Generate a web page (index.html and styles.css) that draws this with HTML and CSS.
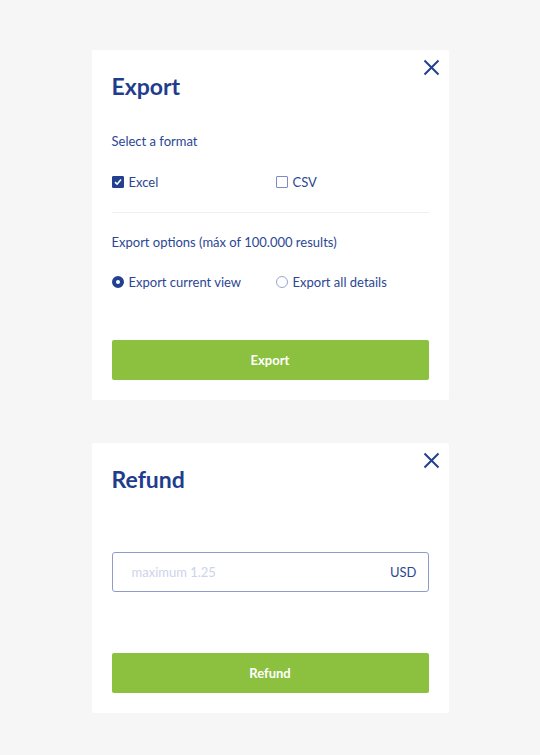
FILE: index.html
```html
<!DOCTYPE html>
<html lang="en">
<head>
<meta charset="utf-8">
<title>Dialogs</title>
<link rel="stylesheet" href="styles.css">
</head>
<body>
<main class="page">
  <section class="card card-export">
    <button class="close" aria-label="Close">
      <svg width="17" height="17" viewBox="0 0 17 17"><path d="M1.5 1.5 L15.5 15.5 M15.5 1.5 L1.5 15.5" stroke="#23408f" stroke-width="2" fill="none"/></svg>
    </button>
    <h2 class="title">Export</h2>
    <p class="label label-format">Select a format</p>
    <div class="options options-format">
      <label class="opt"><span class="box checked"><svg width="8" height="8" viewBox="0 0 8 8"><path d="M1 4.2 L3.1 6.2 L7 1.6" stroke="#fff" stroke-width="1.6" fill="none"/></svg></span>Excel</label>
      <label class="opt"><span class="box"></span>CSV</label>
    </div>
    <hr class="divider">
    <p class="label label-options">Export options (máx of 100.000 results)</p>
    <div class="options options-radio">
      <label class="opt"><span class="radio checked"></span>Export current view</label>
      <label class="opt"><span class="radio"></span>Export all details</label>
    </div>
    <button class="primary primary-export">Export</button>
  </section>

  <section class="card card-refund">
    <button class="close" aria-label="Close">
      <svg width="17" height="17" viewBox="0 0 17 17"><path d="M1.5 1.5 L15.5 15.5 M15.5 1.5 L1.5 15.5" stroke="#23408f" stroke-width="2" fill="none"/></svg>
    </button>
    <h2 class="title title-refund">Refund</h2>
    <div class="field">
      <input class="amount" type="text" placeholder="maximum 1.25">
      <span class="currency">USD</span>
    </div>
    <button class="primary primary-refund">Refund</button>
  </section>
</main>
</body>
</html>
```

FILE: styles.css
```css
* { box-sizing: border-box; }
html, body { margin: 0; padding: 0; }
body {
  background: #f6f6f6;
  font-family: Lato, "Liberation Sans", sans-serif;
  color: #2b4794;
  width: 540px;
  height: 755px;
}
.page {
  display: flex;
  flex-direction: column;
  align-items: center;
  padding-top: 50px;
  gap: 43px;
}
.card {
  position: relative;
  width: 357px;
  background: #fff;
  border-radius: 2px;
  padding: 22px 20px 20px 20px;
  display: flex;
  flex-direction: column;
}
.close {
  position: absolute;
  top: 9px;
  right: 9px;
  width: 17px;
  height: 17px;
  padding: 0;
  border: 0;
  background: none;
  display: flex;
}
.title {
  margin: 0;
  font-size: 23px;
  line-height: 28px;
  font-weight: 700;
  color: #1f3d8c;
}
.label {
  margin: 0;
  font-size: 13px;
  line-height: 18px;
}
.label-format { margin-top: 32px; }
.options {
  display: flex;
  font-size: 13px;
  line-height: 18px;
}
.options-format { margin-top: 23px; }
.options-radio { margin-top: 22px; }
.opt {
  display: flex;
  align-items: center;
  gap: 5px;
  flex: 0 0 auto;
}
.opt:first-child { width: 164px; }
.box {
  width: 12px;
  height: 12px;
  border: 1px solid #7d8cc0;
  border-radius: 1px;
  display: flex;
  align-items: center;
  justify-content: center;
}
.box.checked {
  background: #22408f;
  border-color: #22408f;
}
.radio {
  width: 12px;
  height: 12px;
  border: 1px solid #9aa5cc;
  border-radius: 50%;
}
.radio.checked {
  border: 4px solid #22408f;
}
.divider {
  margin: 21px 0 0 0;
  border: 0;
  height: 1px;
  background: #eef0f5;
}
.label-options { margin-top: 20px; }
.primary {
  height: 40px;
  border: 0;
  border-radius: 2px;
  background: #8cc03f;
  color: #fff;
  font-family: inherit;
  font-size: 13px;
  font-weight: 700;
}
.primary-export { margin-top: 49px; }
.field {
  margin-top: 59px;
  height: 40px;
  border: 1px solid #8f9bcb;
  border-radius: 3px;
  display: flex;
  align-items: center;
  padding: 0 11px 0 19px;
}
.amount {
  flex: 1;
  border: 0;
  outline: none;
  padding: 0;
  font-family: inherit;
  font-size: 13px;
  color: #2b4794;
  background: transparent;
}
.amount::placeholder { color: #cdd3e9; }
.currency {
  font-size: 13px;
  color: #2b4794;
}
.primary-refund { margin-top: 61px; }
```
